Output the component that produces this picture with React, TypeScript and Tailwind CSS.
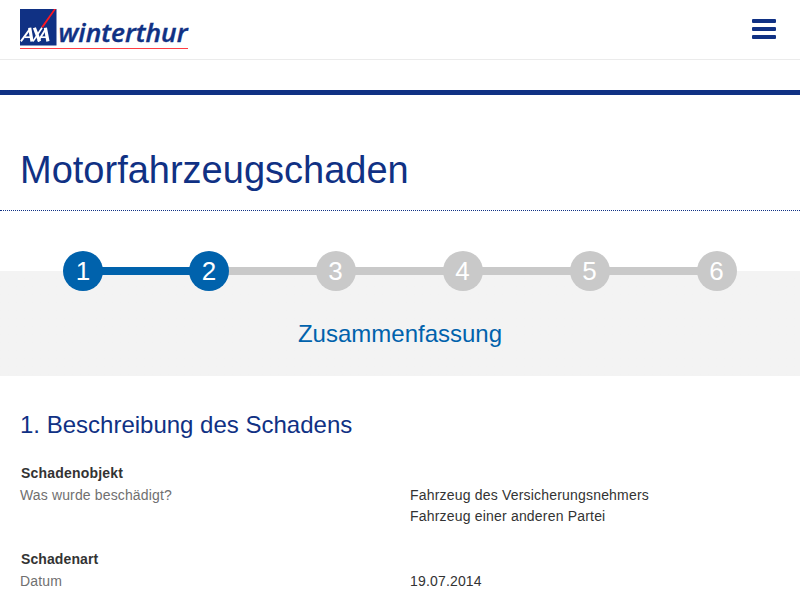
const steps = [1, 2, 3, 4, 5, 6];

function Logo() {
  return (
    <svg width="170" height="42" viewBox="0 0 170 42" role="img" aria-label="AXA winterthur">
      <rect x="0" y="0" width="36.5" height="36.5" fill="#103184" />
      <path d="M20.8 18.4 34 0H36L23.2 18.4Z" fill="#ff1721" />
      <g fill="none" stroke="#fff" strokeLinejoin="miter">
        <path d="M0.9 32.4 10.2 19.6" strokeWidth="1.9" />
        <path d="M9.7 18.8 12 32.4" strokeWidth="3.2" />
        <path d="M4.6 28.2H11" strokeWidth="1.7" />
        <path d="M14.4 18.8 19.6 32.4" strokeWidth="3.2" />
        <path d="M13 32.4 22 18.8" strokeWidth="1.7" />
        <path d="M18 32.4 26 19.6" strokeWidth="1.9" />
        <path d="M25.4 18.8 27.9 32.4" strokeWidth="3.2" />
        <path d="M21 28.2H27" strokeWidth="1.7" />
      </g>
      <text x="38.5" y="32.8" textLength="129" lengthAdjust="spacingAndGlyphs" fill="#103184" fontFamily="'Open Sans', sans-serif" fontSize="25" fontWeight="600" fontStyle="italic" stroke="#103184" strokeWidth="0.4">
        winterthur
      </text>
      <rect x="0" y="39" width="168" height="1" fill="#ff3b42" />
    </svg>
  );
}

export default function App() {
  return (
    <div className="h-[600px] w-[800px] overflow-hidden bg-white font-['Liberation_Sans',Arial,sans-serif] text-[#333]">
      <header className="flex h-[60px] items-start justify-between border-b border-[#ebebeb] pt-[9px] pr-6 pl-5">
        <Logo />
        <button aria-label="Menu" className="mt-[10px] flex w-6 flex-col gap-1">
          <span className="h-1 rounded-[1px] bg-[#103184]" />
          <span className="h-1 rounded-[1px] bg-[#103184]" />
          <span className="h-1 rounded-[1px] bg-[#103184]" />
        </button>
      </header>
      <div className="mt-[30px] h-[5px] bg-[#103184]" />
      <div className="h-[116px] border-b border-dotted border-[#103184] px-5 pt-[53px]">
        <h1 className="text-[38px] leading-[44px] text-[#103184]">Motorfahrzeugschaden</h1>
      </div>
      <section className="h-[165px] bg-linear-to-b from-white from-[60px] to-[#f3f3f3] to-[60px] pt-10">
        <ol className="flex items-center pl-[63px]">
          {steps.map((n) => (
            <li key={n} className="flex items-center">
              {n > 1 && (
                <span
                  className={n === 2 ? "h-2 w-[88px] -mx-px bg-[#0062ac]" : "h-2 w-[89px] -mx-px bg-[#c9c9c9]"}
                />
              )}
              <span
                className={
                  "relative flex size-10 items-center justify-center rounded-full text-[26px] leading-10 text-white " +
                  (n < 3 ? "bg-[#0062ac]" : "bg-[#c9c9c9] pr-px")
                }
              >
                {n}
              </span>
            </li>
          ))}
        </ol>
        <h2 className="mt-[29px] text-center text-2xl leading-7 text-[#0062ac]">Zusammenfassung</h2>
      </section>
      <main className="px-5 pt-[35px] text-sm leading-[21px]">
        <h2 className="text-2xl leading-7 text-[#103184]">1. Beschreibung des Schadens</h2>
        <h3 className="mt-[23px] mb-px pl-px leading-[22px] font-bold tracking-[0.2px]">Schadenobjekt</h3>
        <div className="grid grid-cols-[390px_1fr] tracking-[0.19px]">
          <div className="tracking-[0.14px] text-[#707070]">Was wurde beschädigt?</div>
          <div>
            <p>Fahrzeug des Versicherungsnehmers</p>
            <p>Fahrzeug einer anderen Partei</p>
          </div>
        </div>
        <h3 className="mt-[21px] mb-px pl-px leading-[22px] font-bold tracking-[0.1px]">Schadenart</h3>
        <div className="grid grid-cols-[390px_1fr] tracking-[0.17px]">
          <div className="text-[#707070]">Datum</div>
          <div>19.07.2014</div>
        </div>
      </main>
    </div>
  );
}
